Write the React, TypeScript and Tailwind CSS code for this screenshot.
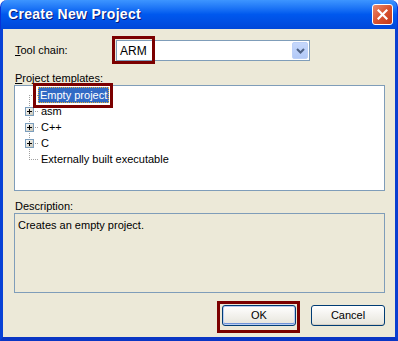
import React from 'react';

const font = { fontFamily: '"Liberation Sans", Arial, sans-serif' };

type Row = { label: string; plus?: boolean; selected?: boolean };

const rows: Row[] = [
  { label: 'Empty project', selected: true },
  { label: 'asm', plus: true },
  { label: 'C++', plus: true },
  { label: 'C', plus: true },
  { label: 'Externally built executable' },
];

const TreeGutter: React.FC<{ first: boolean; last: boolean; plus?: boolean }> = ({ first, last, plus }) => (
  <svg width="23" height="16" className="shrink-0">
    <line
      x1="14.5"
      y1={first ? 8 : 0}
      x2="14.5"
      y2={last ? 8 : 16}
      stroke="#a0a0a0"
      strokeDasharray="1 1"
    />
    <line x1="14" y1="8.5" x2="23" y2="8.5" stroke="#a0a0a0" strokeDasharray="1 1" />
    {plus && (
      <g>
        <defs>
          <linearGradient id="pb" x1="0" y1="0" x2="1" y2="1">
            <stop offset="0" stopColor="#ffffff" />
            <stop offset="1" stopColor="#c6c2b2" />
          </linearGradient>
        </defs>
        <rect x="10.5" y="4.5" width="8" height="8" fill="url(#pb)" stroke="#7b9ebd" />
        <line x1="12" y1="8.5" x2="17" y2="8.5" stroke="#000" />
        <line x1="14.5" y1="6" x2="14.5" y2="11" stroke="#000" />
      </g>
    )}
  </svg>
);

const XpButton: React.FC<{ label: string; primary?: boolean }> = ({ label, primary }) => (
  <button
    className={
      primary
        ? 'w-[74px] h-[21px] rounded-[3px] border border-[#003c74] bg-gradient-to-b from-white to-[#e6e4db] shadow-[inset_0_0_0_1px_#b9cdf2,inset_0_-1px_0_1px_#6f93d9] text-[11px] text-black'
        : 'w-[74px] h-[21px] rounded-[3px] border border-[#003c74] bg-gradient-to-b from-white to-[#e6e4db] shadow-[inset_0_-1px_0_#d6d0c5] text-[11px] text-black'
    }
    style={font}
  >
    {label}
  </button>
);

const App: React.FC = () => {
  return (
    <div className="w-[398px] h-[341px] relative flex flex-col select-none" style={font}>
      {/* title bar */}
      <div className="h-[29px] shrink-0 rounded-t-[7px] bg-gradient-to-b from-[#3d95ff] via-[#0058ee] to-[#0047d9] flex items-center justify-between pl-[7px] pr-[4px] border-x border-[#0831d9]">
        <span className="text-white font-bold text-[14px] tracking-[0.3px] [text-shadow:1px_1px_0_#0a1874]">
          Create New Project
        </span>
        <div className="w-[21px] h-[21px] rounded-[3px] border border-white bg-gradient-to-br from-[#e9886c] via-[#d9532f] to-[#c2381a] flex items-center justify-center">
          <svg width="11" height="11" viewBox="0 0 11 11">
            <path d="M1.5 1.5 L9.5 9.5 M9.5 1.5 L1.5 9.5" stroke="#fff" strokeWidth="2.2" strokeLinecap="square" />
          </svg>
        </div>
      </div>

      {/* body */}
      <div className="flex-1 bg-[#ece9d8] border-l-[3px] border-r-[3px] border-b-[4px] border-l-[#0842d6] border-r-[#0a3fd0] border-b-[#0a36c4] pl-[11px] pr-[9px] pt-[11px] flex flex-col text-[11px] text-black">
        <div className="flex items-center h-[21px]">
          <span className="w-[102px] pl-[1px]">
            <span className="underline">T</span>ool chain:
          </span>
          <div className="w-[194px] h-[21px] bg-white border border-[#7f9db9] flex items-center pl-[3px] pr-[1px]">
            <span className="flex-1 text-[12px]">ARM</span>
            <div className="w-[16px] h-[17px] rounded-[2px] bg-gradient-to-b from-[#c6d8fc] to-[#b2c9f7] border border-[#bcd0f8] flex items-center justify-center">
              <svg width="9" height="6" viewBox="0 0 9 6">
                <path d="M1 1 L4.5 4.5 L8 1" stroke="#4d6185" strokeWidth="2" fill="none" />
              </svg>
            </div>
          </div>
        </div>

        <div className="mt-[9px] h-[15px] pl-[1px]">
          <span className="underline">P</span>roject templates:
        </div>

        <div className="w-[371px] h-[106px] bg-white border border-[#7f9db9] pt-[1px]">
          {rows.map((r, i) => (
            <div key={r.label} className="h-[16px] flex items-center">
              <TreeGutter first={i === 0} last={i === rows.length - 1} plus={r.plus} />
              {r.selected ? (
                <span className="h-[16px] bg-[#316ac5] text-white px-[2px] flex items-center outline outline-1 outline-dotted outline-[#e0b040] -outline-offset-1">
                  {r.label}
                </span>
              ) : (
                <span className="px-[3px]">{r.label}</span>
              )}
            </div>
          ))}
        </div>

        <div className="mt-[7px] h-[15px] pl-[1px]">Description:</div>
        <div className="w-[371px] h-[80px] border border-[#7f9db9] px-[3px] pt-[3px]">Creates an empty project.</div>

        <div className="flex justify-end gap-[15px] mt-[12px] pr-[1px]">
          <XpButton label="OK" primary />
          <XpButton label="Cancel" />
        </div>
      </div>

      {/* annotation boxes */}
      <div className="absolute left-[112px] top-[36px] w-[43px] h-[28px] border-[3px] border-[#7b0000]" />
      <div className="absolute left-[33px] top-[83px] w-[80px] h-[25px] border-[3px] border-[#7b0000]" />
      <div className="absolute left-[217px] top-[301px] w-[83px] h-[32px] border-[3px] border-[#7b0000]" />
    </div>
  );
};

export default App;
